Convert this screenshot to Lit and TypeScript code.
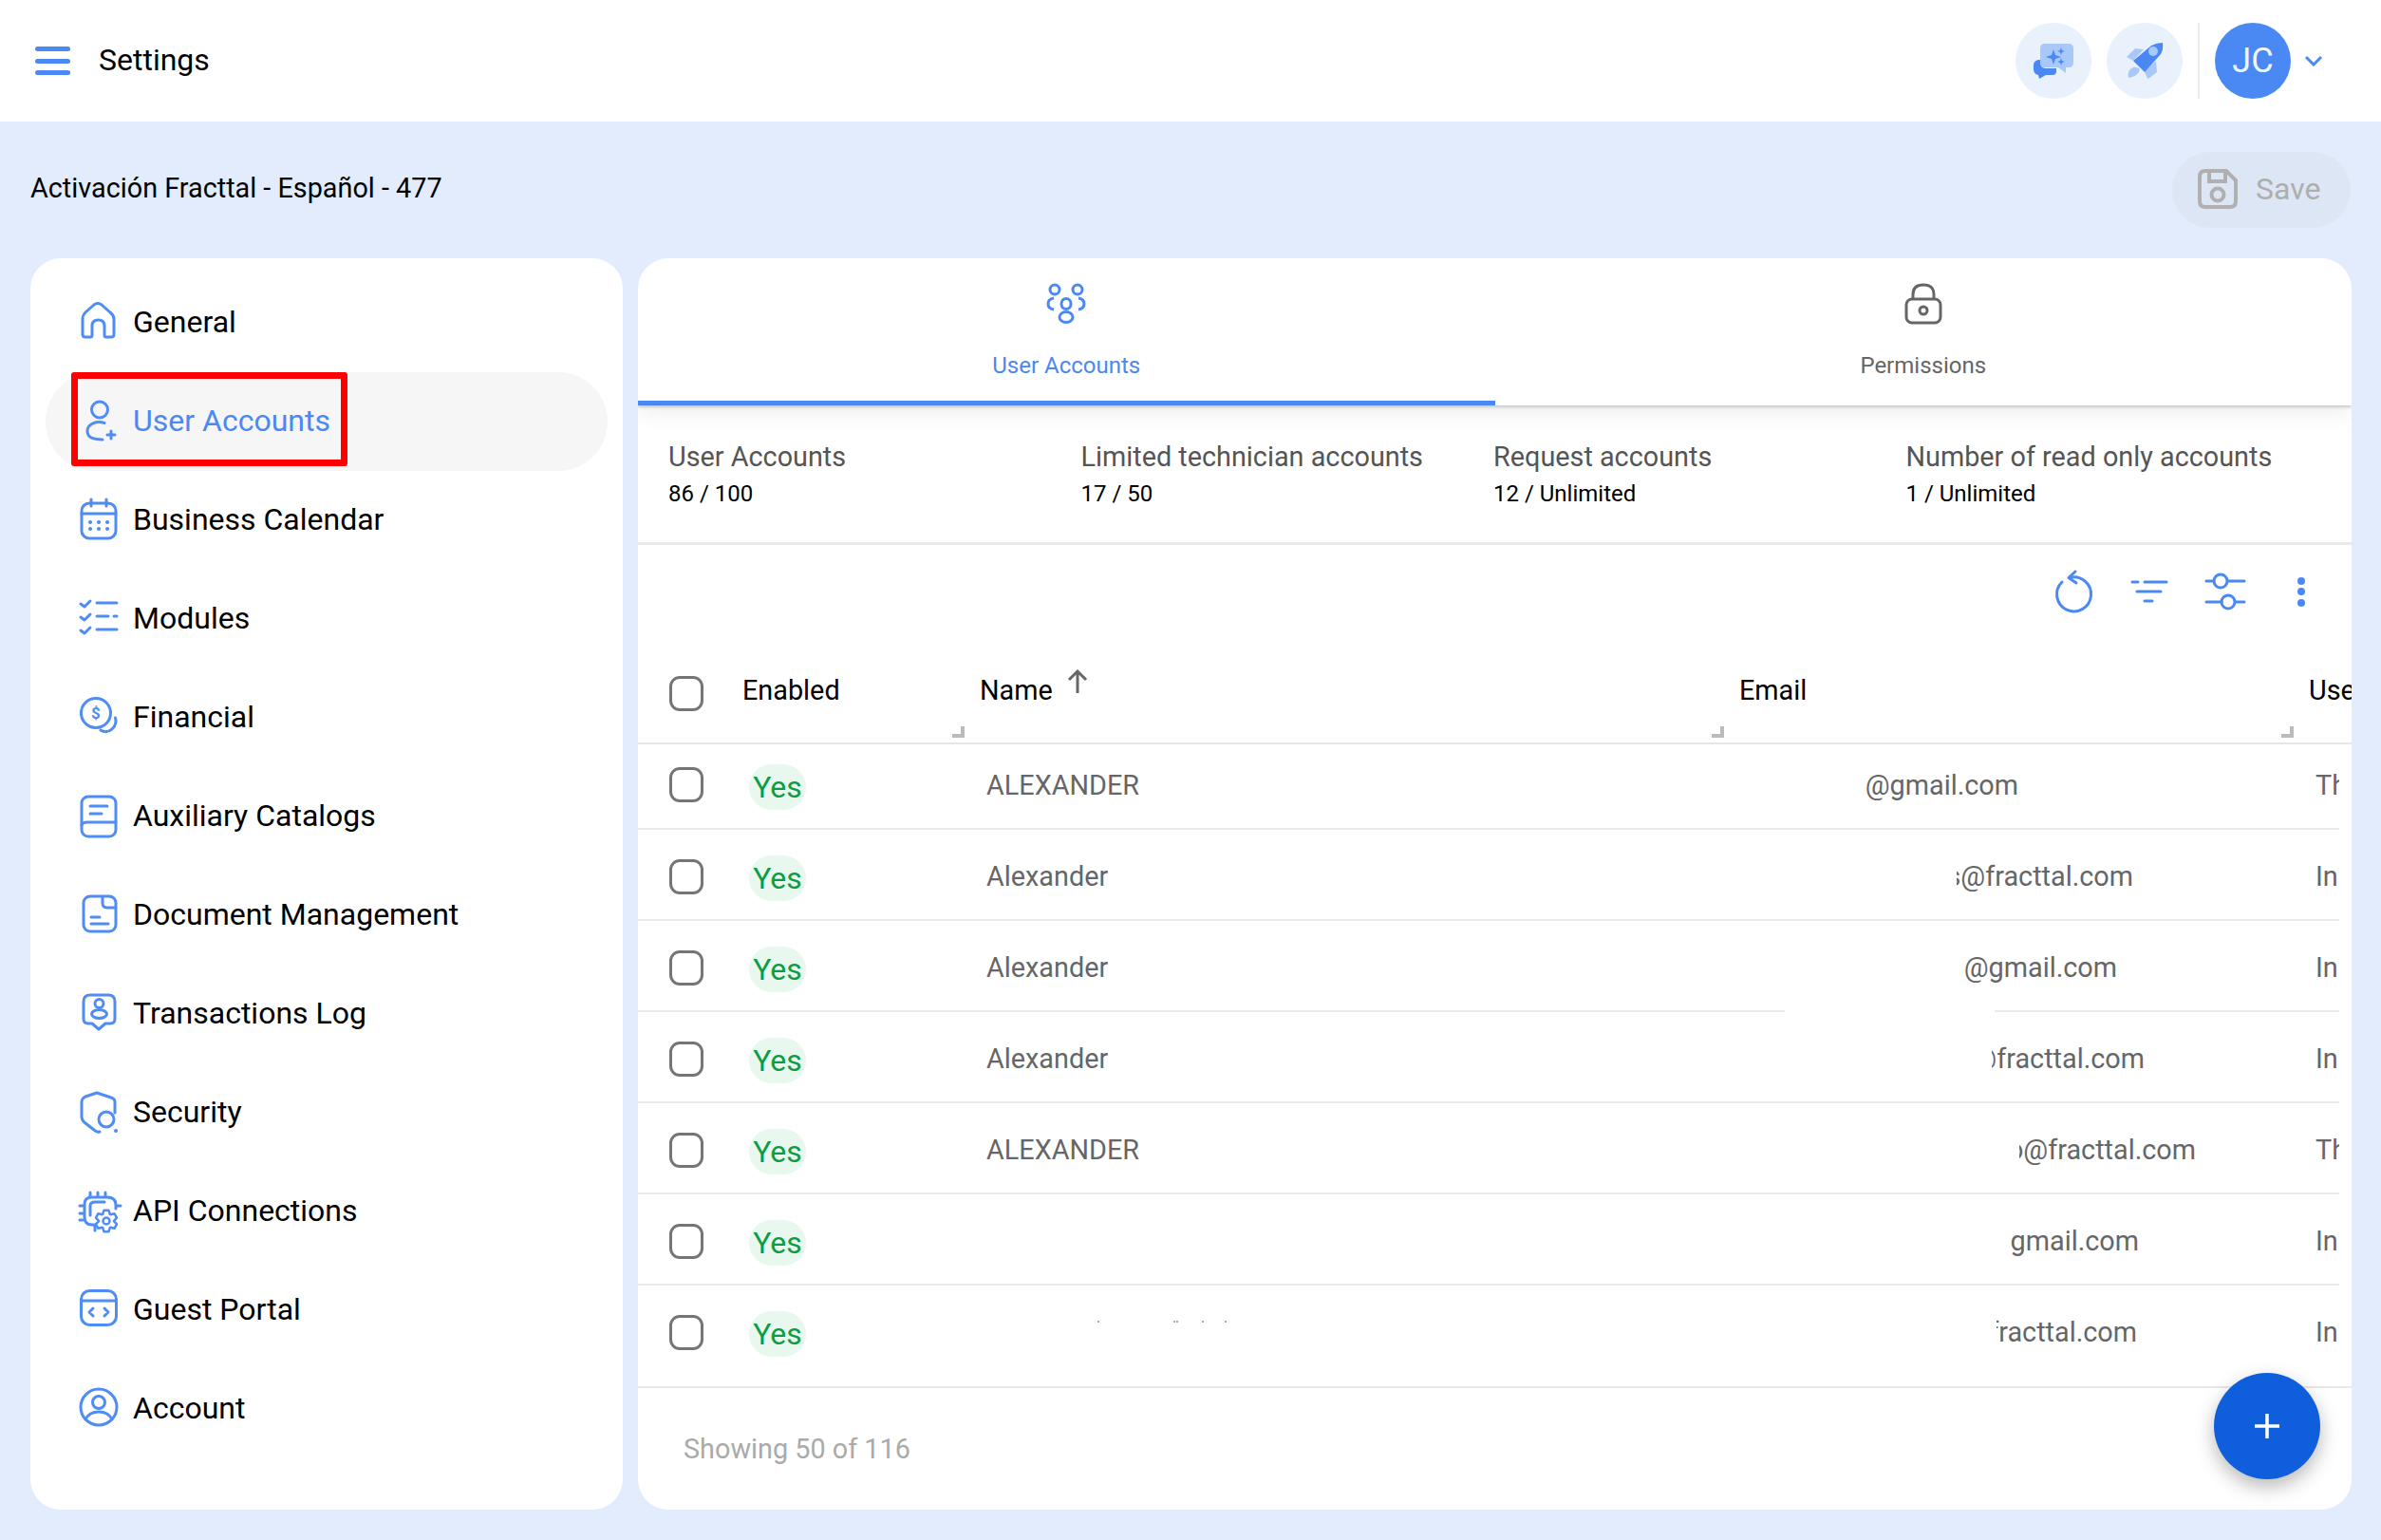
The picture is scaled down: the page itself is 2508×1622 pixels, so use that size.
import { LitElement, html, css, svg } from 'lit';
import { customElement } from 'lit/decorators.js';

// six-lobed gear outline for the API Connections icon
const gearPath = (cx: number, cy: number) => {
  const pts: string[] = [];
  for (let i = 0; i < 6; i++) {
    const a = (i * Math.PI) / 3;
    for (const [da, r] of [[-0.5, 8], [-0.22, 11.5], [0.22, 11.5], [0.5, 8]]) {
      pts.push(`${(cx + r * Math.sin(a + da)).toFixed(1)} ${(cy - r * Math.cos(a + da)).toFixed(1)}`);
    }
  }
  return `M${pts.join(' L')} Z`;
};

const navIcons: Record<string, unknown> = {
  home: svg`<path d="M3 17 Q3 14 6 11 L15 3 Q19 0 23 3 L32 11 Q36 14 36 18 V34 Q36 37 33 37 H28 Q26 37 26 35 V25 Q26 19 19.500 19 Q13 19 13 25 V35 Q13 37 11 37 H6 Q3 37 3 34 Z"/>`,
  user: svg`<circle cx="21" cy="9.500" r="8.500"/><path d="M26 23.500 C18 21 8 24 8 32 C8 40 16 41 24 41"/><path d="M29 36 H37 M33 32 V40"/>`,
  calendar: svg`<rect x="2" y="4" width="36" height="37" rx="8"/><path d="M2 15 H38 M12 0 V7 M28 0 V7"/><path class="dots" d="M11 24 H11.100 M20 24 H20.100 M29 24 H29.100 M11 31 H11.100 M20 31 H20.100 M29 31 H29.100"/>`,
  modules: svg`<path d="M1 6 L5 9 L11 3 M1 20 L5 23 L11 17 M1 34 L5 37 L11 31"/><path d="M18 5 H39 M18 19 H30 M36 19 H39 M18 33 H39"/>`,
  financial: svg`<circle cx="17" cy="17" r="15.500"/><path d="M37.500 22 C40 32 30 40 22 35"/><text x="17" y="23" text-anchor="middle" class="dollar">$</text>`,
  book: svg`<rect x="2" y="1" width="36" height="42" rx="7"/><path d="M2 31 Q3 28 8 28 H38"/><path d="M11 11 H29 M11 19 H23"/>`,
  doc: svg`<rect x="4" y="2" width="34" height="37" rx="7"/><path d="M24 3 V9 Q24 14 29 14 H37"/><path d="M12 24 H21 M12 31 H30"/>`,
  log: svg`<path d="M11 2 H30 Q37 2 37 9 V27 Q37 32 32 32 H27 L20 38 L13 32 H9 Q4 32 4 27 V9 Q4 2 11 2 Z"/><circle cx="20.500" cy="11" r="4.500"/><ellipse cx="20.500" cy="22" rx="8" ry="4.500"/>`,
  security: svg`<path d="M37 22 V11 Q37 7 33 6 L18 1 L6 5 Q2 7 2 11 V26 Q2 30 6 33 L15 40 Q18 43 21 42"/><circle cx="28" cy="29" r="8"/><path class="dots" d="M38 41 H38.100"/>`,
  api: svg`<path d="M16 36 H13 Q5 36 5 28 V14 Q5 7 13 7 H29 Q38 7 38 15 V19"/><path d="M11 26 V16 Q11 12 16 12 H26"/><path d="M11 2 V6 M19 2 V6 M27 2 V6 M0 16 H3 M0 24 H3 M0 31 H3 M39 16 H43 M16 37 V42"/><path class="thin" d="${gearPath(28, 32)}"/><circle class="thin" cx="28" cy="32" r="3.500"/>`,
  portal: svg`<rect x="1.500" y="1.500" width="37" height="36" rx="9"/><path d="M2 12 H38"/><path d="M14 20 L10 24 L14 28 M26 20 L30 24 L26 28"/>`,
  account: svg`<circle cx="20" cy="20" r="19"/><circle cx="20" cy="15" r="6.500"/><path d="M6 33 Q10 25 20 25 Q30 25 34 33"/>`,
};

const navItems = [
  { label: 'General', icon: 'home' },
  { label: 'User Accounts', icon: 'user', active: true },
  { label: 'Business Calendar', icon: 'calendar' },
  { label: 'Modules', icon: 'modules' },
  { label: 'Financial', icon: 'financial' },
  { label: 'Auxiliary Catalogs', icon: 'book' },
  { label: 'Document Management', icon: 'doc' },
  { label: 'Transactions Log', icon: 'log' },
  { label: 'Security', icon: 'security' },
  { label: 'API Connections', icon: 'api' },
  { label: 'Guest Portal', icon: 'portal' },
  { label: 'Account', icon: 'account' },
];

const stats = [
  ['User Accounts', '86 / 100'],
  ['Limited technician accounts', '17 / 50'],
  ['Request accounts', '12 / Unlimited'],
  ['Number of read only accounts', '1 / Unlimited'],
];

// offset = where the email starts inside its column, clip = visible width (the rest is hidden)
const rows = [
  { name: 'ALEXANDER', email: '@gmail.com', offset: 124, clip: 170, type: 'Th' },
  { name: 'Alexander', email: 's@fracttal.com', offset: 229, clip: 186, type: 'In' },
  { name: 'Alexander', email: '@gmail.com', offset: 228, clip: 170, type: 'In', gap: true },
  { name: 'Alexander', email: '@fracttal.com', offset: 266, clip: 161, type: 'In' },
  { name: 'ALEXANDER', email: 'o@fracttal.com', offset: 295, clip: 186, type: 'Th' },
  { name: '', email: 'gmail.com', offset: 251, clip: 170, type: 'In' },
  { name: '', email: 'fracttal.com', offset: 271, clip: 148, type: 'In', specks: [124, 204, 207, 234, 258] },
];

@customElement('app-root')
export class AppRoot extends LitElement {
  static styles = css`
    :host {
      display: block;
      width: 2508px;
      height: 1622px;
      background: #e3ecfc;
      font-family: Roboto, 'Liberation Sans', sans-serif;
      color: #000;
      overflow: hidden;
    }

    .top {
      height: 128px;
      background: #fff;
      display: flex;
      align-items: center;
      padding: 0 61px 0 37px;
      box-sizing: border-box;
    }
    .burger {
      width: 37px;
      height: 30px;
      margin-right: 30px;
      display: flex;
      flex-direction: column;
      justify-content: space-between;
    }
    .burger i {
      height: 5px;
      border-radius: 3px;
      background: #4a89f3;
    }
    .top h1 {
      margin: -2px 0 0;
      font-size: 32px;
      font-weight: 400;
      flex: 1;
    }
    .round {
      width: 80px;
      height: 80px;
      border-radius: 50%;
      background: #e9f1fd;
      display: flex;
      align-items: center;
      justify-content: center;
      margin-left: 16px;
    }
    .sep {
      width: 2px;
      height: 80px;
      background: #ebebeb;
      margin: 0 16px;
    }
    .avatar {
      width: 80px;
      height: 80px;
      border-radius: 50%;
      background: #4a89f3;
      color: #f1f6fe;
      font-size: 36px;
      display: flex;
      align-items: center;
      justify-content: center;
    }
    .chev {
      margin-left: 14px;
      width: 20px;
      height: 12px;
      fill: none;
      stroke: #4a89f3;
      stroke-width: 3;
    }

    .title-row {
      height: 144px;
      display: flex;
      align-items: center;
      justify-content: space-between;
      padding: 0 32px;
    }
    .title-row span.t {
      font-size: 28.800px;
      margin-top: -4px;
    }
    .save {
      width: 188px;
      height: 80px;
      box-sizing: border-box;
      border-radius: 40px;
      background: #dde6f4;
      color: #aeaeae;
      font-size: 32px;
      display: flex;
      align-items: center;
      gap: 19px;
      padding: 0 0 2px 27px;
    }
    .save svg {
      width: 42px;
      height: 42px;
      fill: none;
      stroke: #b0b0b0;
      stroke-width: 4;
    }

    .body {
      display: flex;
      gap: 16px;
      padding: 0 31px 0 32px;
      height: 1318px;
    }

    .side {
      width: 624px;
      background: #fff;
      border-radius: 32px;
      padding: 16px 16px 0;
      box-sizing: border-box;
    }
    .nav {
      position: relative;
      height: 104px;
      border-radius: 52px;
      display: flex;
      align-items: center;
      gap: 16px;
      padding-left: 36px;
      font-size: 32px;
    }
    .nav.active {
      background: #f6f6f6;
      color: #4a89f3;
    }
    .nav span {
      margin-top: -3px;
    }
    .nav svg {
      width: 40px;
      height: 44px;
      flex: none;
      fill: none;
      overflow: visible;
      stroke: #4f8cf5;
      stroke-width: 3;
      stroke-linecap: round;
      stroke-linejoin: round;
    }
    .nav svg .dots {
      stroke-width: 4;
    }
    .nav svg .thin {
      stroke-width: 2.500;
    }
    .nav svg .dollar {
      font: 700 17px Roboto, sans-serif;
      fill: #4f8cf5;
      stroke: none;
    }
    .marker {
      position: absolute;
      left: 27px;
      top: 0;
      width: 291px;
      height: 99px;
      box-sizing: border-box;
      border: 7px solid #f00;
      border-radius: 3px;
    }

    .card {
      position: relative;
      flex: 1;
      background: #fff;
      border-radius: 32px;
      overflow: hidden;
      display: flex;
      flex-direction: column;
    }
    .tabs {
      display: flex;
      height: 155px;
      flex: none;
      position: relative;
      box-shadow: 0 2px 3px rgba(0, 0, 0, 0.18), 0 10px 20px rgba(0, 0, 0, 0.06);
    }
    .tab {
      flex: 1;
      box-sizing: border-box;
      display: flex;
      flex-direction: column;
      align-items: center;
      color: #666;
      font-size: 24px;
      padding-top: 25px;
    }
    .tab svg {
      width: 44px;
      height: 46px;
      fill: none;
      stroke: #666;
      stroke-width: 3;
      margin-bottom: 28px;
    }
    .tab.on {
      color: #4a89f3;
      border-bottom: 5px solid #4a89f3;
    }
    .tab.on svg {
      stroke: #4a89f3;
    }

    .stats {
      flex: none;
      height: 147px;
      box-sizing: border-box;
      border-bottom: 3px solid #e9e9e9;
      display: grid;
      grid-template-columns: repeat(4, 434.500px);
      padding: 36px 0 0 32px;
    }
    .stats .k {
      font-size: 28.800px;
      color: #555;
      line-height: 36px;
    }
    .stats .v {
      font-size: 24px;
      line-height: 28px;
      margin-top: 7px;
    }

    .tools {
      flex: none;
      display: flex;
      justify-content: flex-end;
      padding: 9px 13px 0 0;
      height: 80px;
    }
    .tools div {
      width: 80px;
      height: 80px;
      display: flex;
      align-items: center;
      justify-content: center;
    }
    .tools svg {
      width: 50px;
      height: 50px;
      fill: none;
      stroke: #4a89f3;
      stroke-width: 3;
      stroke-linecap: round;
      stroke-linejoin: round;
    }

    .cols {
      display: grid;
      grid-template-columns: 110px 250px 800px 600px 96px;
      overflow: hidden;
    }
    .cols.head {
      flex: none;
      height: 121px;
      box-sizing: border-box;
      border-bottom: 2px solid #e6e6e6;
      font-size: 28.800px;
      position: relative;
      align-items: start;
      padding-top: 47px;
    }
    .head .hname {
      display: flex;
      align-items: flex-start;
    }
    .head svg.up {
      width: 24px;
      height: 26px;
      margin: -6px 0 0 14px;
      fill: none;
      stroke: #666;
      stroke-width: 3;
    }
    .grip {
      position: absolute;
      top: 102px;
      width: 13px;
      height: 12px;
      box-sizing: border-box;
      border-right: 4px solid #bbb;
      border-bottom: 4px solid #bbb;
    }
    .check {
      width: 36px;
      height: 37px;
      box-sizing: border-box;
      border: 3px solid #757575;
      border-radius: 11px;
      margin-left: 33px;
    }
    .head .check {
      margin-top: 2px;
    }

    .row {
      position: relative;
      width: 1792px;
      height: 96px;
      box-sizing: border-box;
      border-bottom: 2px solid #e9e9e9;
      align-items: center;
      padding-top: 4px;
      font-size: 28.800px;
      color: #666;
    }
    .row.first {
      height: 90px;
      padding: 0 0 3px;
    }
    .row.last {
      width: auto;
      height: 108px;
      padding: 0 0 8px;
      grid-template-columns: 110px 250px 800px 600px 82px;
    }
    .row.gap {
      overflow: visible;
    }
    .row .hole {
      position: absolute;
      left: 1208px;
      bottom: -2px;
      width: 221px;
      height: 2px;
      background: #fff;
    }
    .yes {
      justify-self: start;
      margin: 4px 0 0 7px;
      width: 60px;
      height: 48px;
      border-radius: 24px;
      background: #e8f8ee;
      color: #0a9d46;
      font-size: 32px;
      line-height: 48px;
      text-align: center;
    }
    .name {
      padding-left: 7px;
      position: relative;
    }
    .speck {
      position: absolute;
      top: -12px;
      width: 2px;
      height: 2px;
      background: #aaa;
    }
    .email {
      display: flex;
      justify-content: flex-end;
      overflow: hidden;
      white-space: nowrap;
    }
    .use {
      padding-left: 7px;
      overflow: hidden;
    }

    .foot {
      flex: 1;
      display: flex;
      align-items: center;
      padding-left: 48px;
      font-size: 28.800px;
      color: #aaa;
    }
    .fab {
      position: absolute;
      right: 33px;
      bottom: 32px;
      width: 112px;
      height: 112px;
      border-radius: 50%;
      background: #0f5fdc;
      box-shadow: 0 8px 20px rgba(0, 0, 0, 0.28);
      display: flex;
      align-items: center;
      justify-content: center;
    }
    .fab svg {
      width: 28px;
      height: 28px;
      stroke: #fff;
      stroke-width: 3.500;
    }
  `;

  private renderTop() {
    return html`
      <div class="top">
        <div class="burger"><i></i><i></i><i></i></div>
        <h1>Settings</h1>
        <div class="round">
          <svg width="44" height="40" viewBox="0 0 44 40">
            <path fill="#a9c8f9" d="M13 2 H38 Q43 2 43 7 V22 Q43 27 38 27 L35 27 L35 33 L27 27 H13 Q8 27 8 22 V7 Q8 2 13 2 Z" />
            <path fill="#4a89f3" d="M6 19 H8 V22 Q8 27 13 28 L25 28 V31 Q25 35 21 35 H14 L7 39 L6 35 Q1 34 1 29 V25 Q1 20 6 19 Z" />
            <path fill="#4a89f3" d="M22 8 L24 14 L30 16 L24 18 L22 24 L20 18 L14 16 L20 14 Z M30 6 L31 9 L34 10 L31 11 L30 14 L29 11 L26 10 L29 9 Z M30 17 L31 20 L34 21 L31 22 L30 25 L29 22 L26 21 L29 20 Z" />
          </svg>
        </div>
        <div class="round">
          <svg width="40" height="40" viewBox="0 0 40 40">
            <path fill="#a9c8f9" d="M1 16 L10 7 L19 8 L8 20 Z M32 20 L33 32 L24 39 Q22 38 20 31 Z M3 38 Q1 30 8 27 Q12 26 15 29 Q14 36 3 38 Z" />
            <path fill="#4a89f3" d="M8 20 L27 4 Q33 1 39 1 Q40 8 37 13 L20 32 Z" />
            <circle fill="#a9c8f9" cx="29" cy="10" r="5" />
          </svg>
        </div>
        <div class="sep"></div>
        <div class="avatar">JC</div>
        <svg class="chev" viewBox="0 0 20 12"><path d="M2 2 L10 10 L18 2" /></svg>
      </div>
    `;
  }

  private renderToolbar() {
    return html`
      <div class="tools">
        <div>
          <svg viewBox="0 0 50 50">
            <path d="M13 15 A18 18 0 1 0 21 10.500" />
            <path d="M27 4 L20 10.500 L28 16" />
          </svg>
        </div>
        <div>
          <svg viewBox="0 0 50 50">
            <path d="M7 15 H13 M20 15 H43 M12 25 H37 M20 35 H28" />
          </svg>
        </div>
        <div>
          <svg viewBox="0 0 50 50">
            <path d="M5 14 H13 M28 14 H45 M5 36 H21 M36 36 H45" />
            <circle cx="20" cy="14" r="7" />
            <circle cx="28" cy="36" r="7" />
          </svg>
        </div>
        <div>
          <svg viewBox="0 0 50 50">
            <g fill="#4a89f3" stroke="none">
              <circle cx="25" cy="14" r="4" />
              <circle cx="25" cy="25" r="4" />
              <circle cx="25" cy="37" r="4" />
            </g>
          </svg>
        </div>
      </div>
    `;
  }

  private renderRow(r: (typeof rows)[number], i: number) {
    const cls = i === 0 ? 'first' : i === rows.length - 1 ? 'last' : '';
    return html`
      <div class="cols row ${cls} ${r.gap ? 'gap' : ''}">
        <div class="check"></div>
        <div class="yes">Yes</div>
        <div class="name">
          ${r.name}
          ${(r.specks ?? []).map((x) => html`<i class="speck" style="left:${x}px"></i>`)}
        </div>
        <div class="email" style="margin-left:${r.offset}px;width:${r.clip}px">${r.email}</div>
        <div class="use">${r.type}</div>
        ${r.gap ? html`<i class="hole"></i>` : ''}
      </div>
    `;
  }

  render() {
    return html`
      ${this.renderTop()}
      <div class="title-row">
        <span class="t">Activación Fracttal - Español - 477</span>
        <div class="save">
          <svg viewBox="0 0 42 42">
            <path d="M8 2 H30 L40 12 V34 Q40 40 34 40 H8 Q2 40 2 34 V8 Q2 2 8 2 Z" />
            <path d="M12 3 V13 H29 V3" />
            <circle cx="21" cy="27" r="6.500" />
          </svg>
          Save
        </div>
      </div>
      <div class="body">
        <div class="side">
          ${navItems.map(
            (n) => html`
              <div class="nav ${n.active ? 'active' : ''}">
                <svg viewBox="0 0 40 44">${navIcons[n.icon]}</svg>
                <span>${n.label}</span>
                ${n.active ? html`<div class="marker"></div>` : ''}
              </div>
            `,
          )}
        </div>
        <div class="card">
          <div class="tabs">
            <div class="tab on">
              <svg viewBox="0 0 44 46">
                <circle cx="10" cy="8" r="5" />
                <circle cx="34" cy="8" r="5" />
                <ellipse cx="22" cy="23" rx="5" ry="5.500" />
                <ellipse cx="22" cy="37" rx="7" ry="5.500" />
                <path d="M9 17 Q3 18 3 23 Q3 28 9 29 M35 17 Q41 18 41 23 Q41 28 35 29" />
              </svg>
              User Accounts
            </div>
            <div class="tab">
              <svg viewBox="0 0 44 46">
                <rect x="4" y="18" width="36" height="25" rx="6" />
                <path d="M11 18 V13 Q11 3 22 3 Q33 3 33 13 V18" />
                <circle cx="22" cy="30" r="4" />
              </svg>
              Permissions
            </div>
          </div>
          <div class="stats">
            ${stats.map(
              ([k, v]) => html`
                <div>
                  <div class="k">${k}</div>
                  <div class="v">${v}</div>
                </div>
              `,
            )}
          </div>
          ${this.renderToolbar()}
          <div class="cols head">
            <div class="check"></div>
            <div>Enabled</div>
            <div class="hname">
              Name
              <svg class="up" viewBox="0 0 24 26"><path d="M12 26 V3 M3 12 L12 3 L21 12" /></svg>
            </div>
            <div>Email</div>
            <div>Use</div>
            <i class="grip" style="left:331px"></i>
            <i class="grip" style="left:1131px"></i>
            <i class="grip" style="left:1731px"></i>
          </div>
          ${rows.map((r, i) => this.renderRow(r, i))}
          <div class="foot">Showing 50 of 116</div>
          <div class="fab">
            <svg viewBox="0 0 28 28"><path d="M14 1 V27 M1 14 H27" /></svg>
          </div>
        </div>
      </div>
    `;
  }
}
